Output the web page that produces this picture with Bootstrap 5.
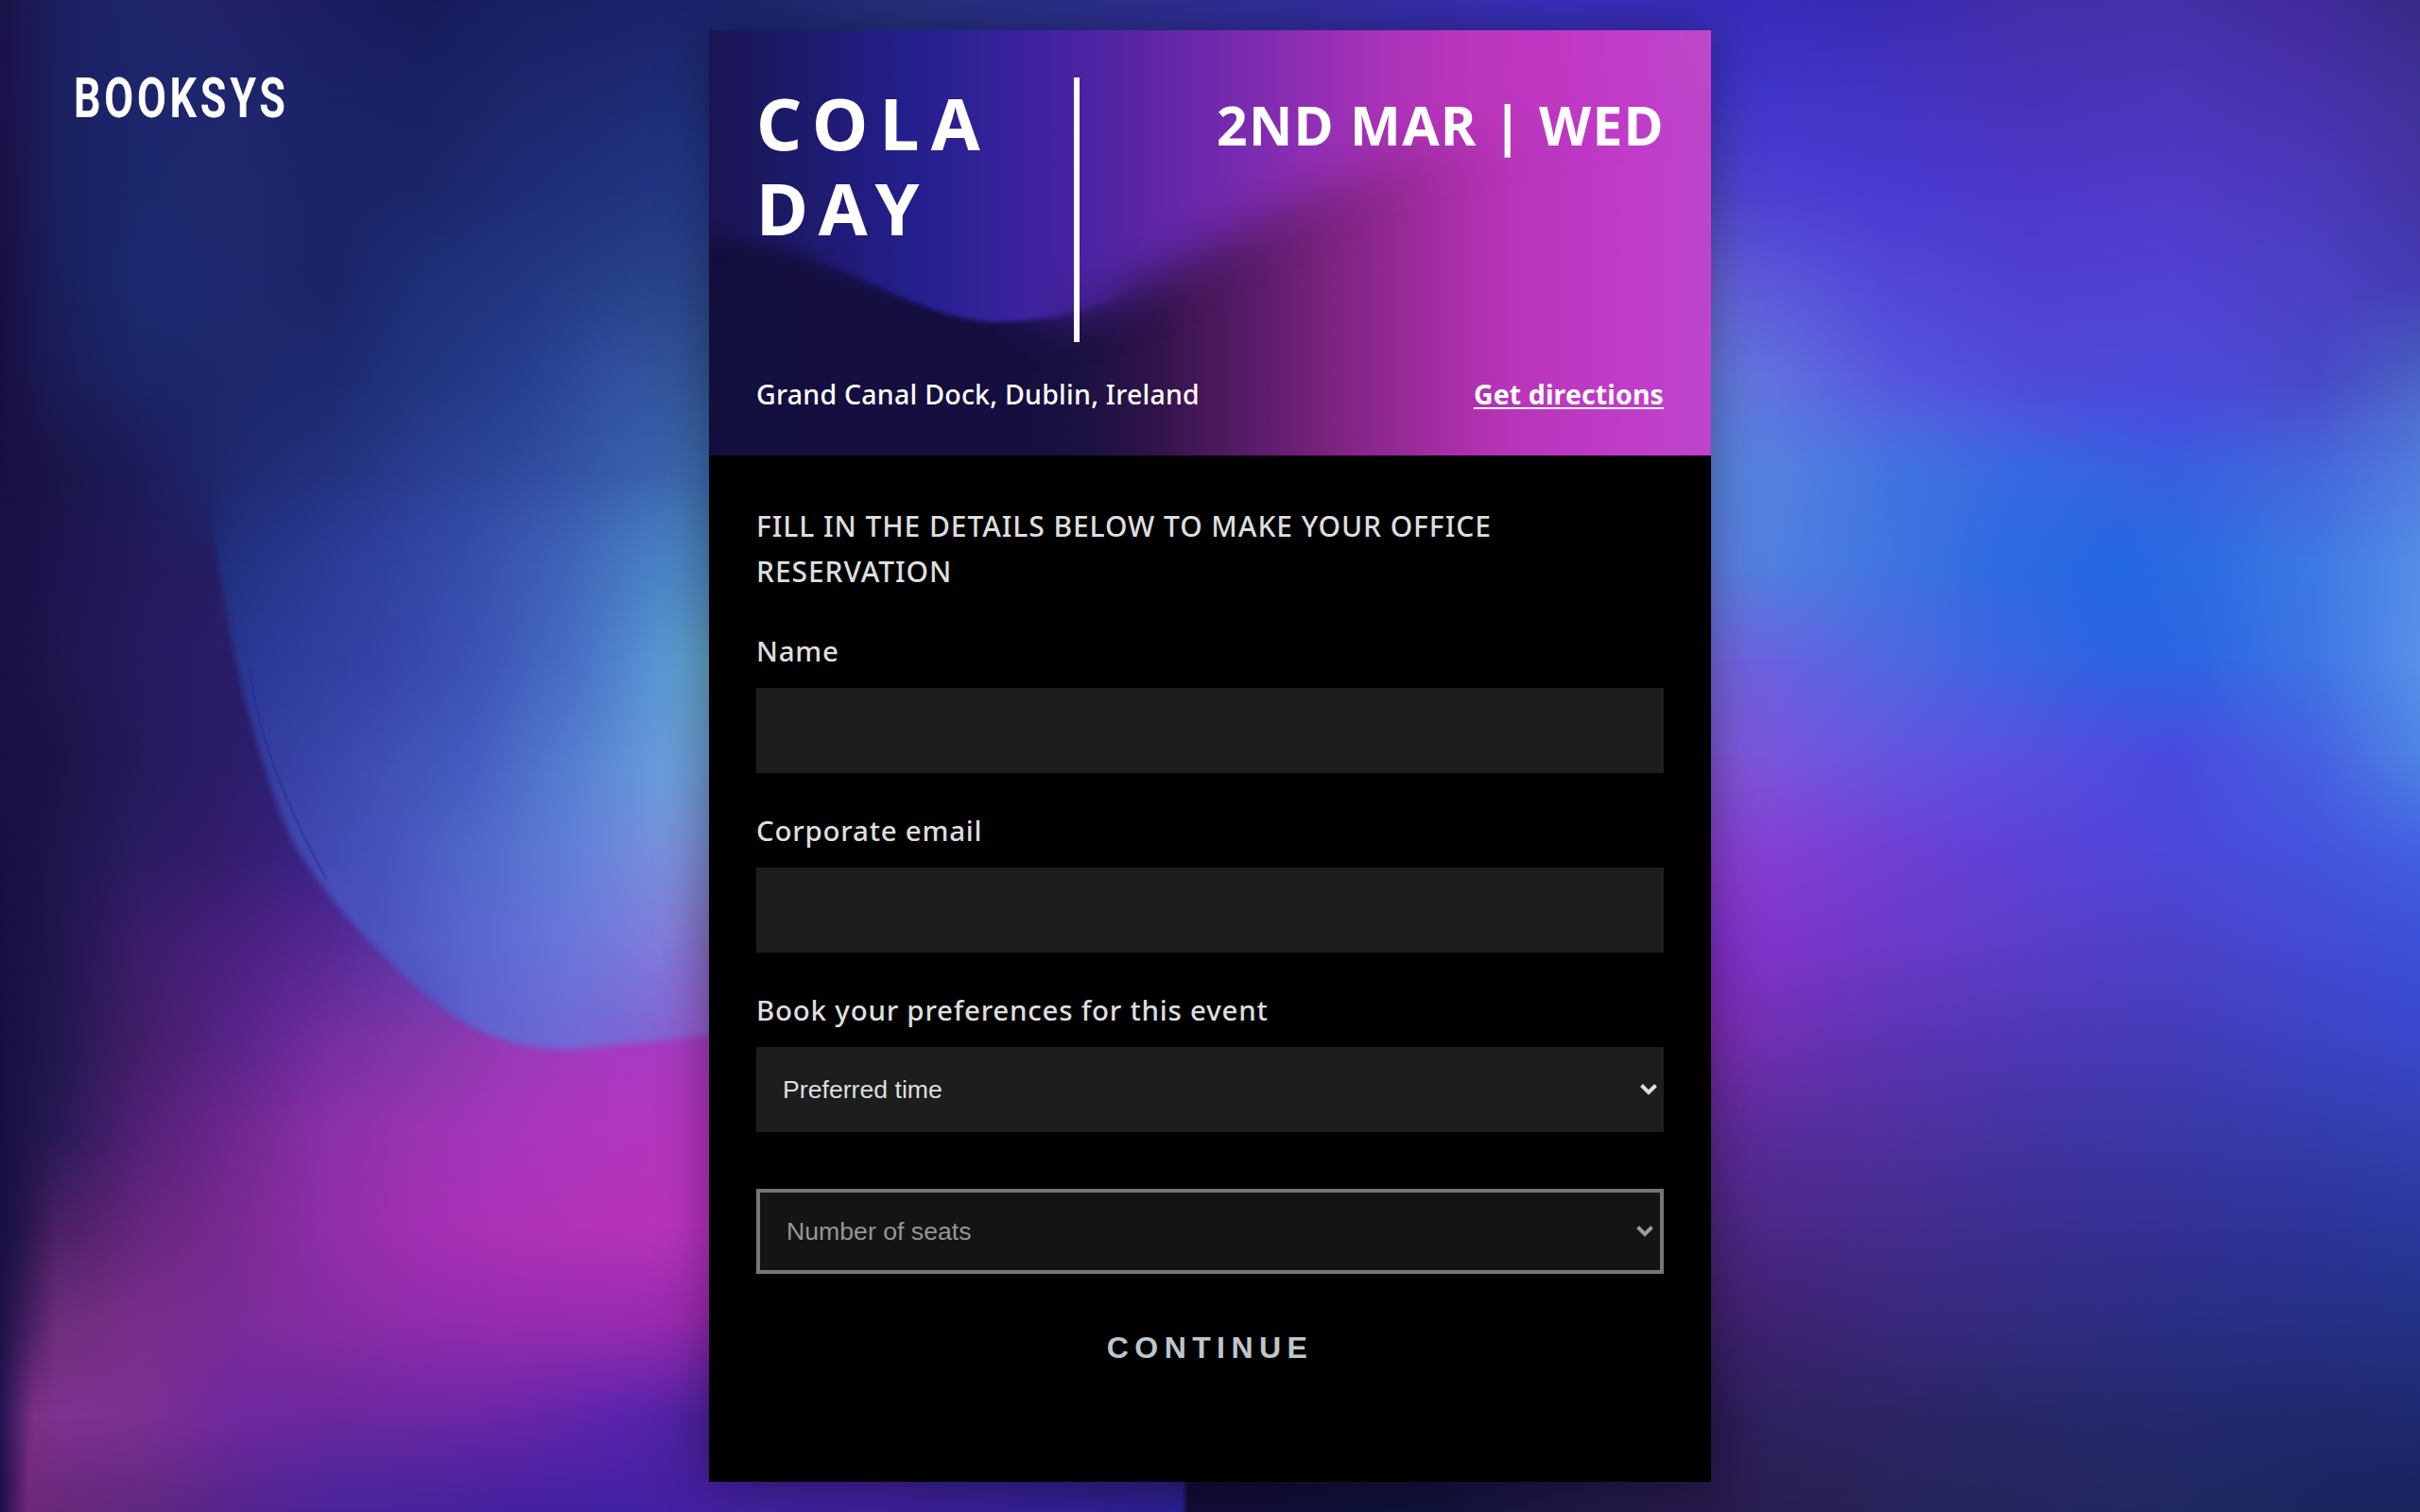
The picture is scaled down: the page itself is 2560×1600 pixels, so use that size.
<!DOCTYPE html>
<html lang="en">
<head>
<meta charset="utf-8">
<meta name="viewport" content="width=device-width, initial-scale=1">
<title>Booksys – Cola Day</title>
<link href="https://cdn.jsdelivr.net/npm/bootstrap@5.3.0/dist/css/bootstrap.min.css" rel="stylesheet">
<style>
  body { font-family: "Noto Sans", sans-serif; background: #1b1650; width: 2560px; height: 1600px; }
  .backdrop, .backdrop .wash, .blob, .blob-shape { position: absolute; inset: 0; }
  .blob { filter: blur(3px); -webkit-mask-image: linear-gradient(transparent 500px, #000 600px); mask-image: linear-gradient(transparent 500px, #000 600px); }
  .blob-shape { clip-path: path("M214 480 C222 540 224 560 230 587 C240 630 244 690 262 750 C275 796 290 850 311 892 C335 935 370 975 398 1003 C430 1037 470 1070 497 1085 C530 1102 560 1109 589 1110 C640 1110 700 1098 770 1094 L770 480 Z"); }
  .crease { position: absolute; left: 0; top: 0; }
  .brand { left: 78px; top: 70px; }
  .event-card { width: 1060px; height: 1536px; margin-top: 32px; background: #000; box-shadow: 0 0 50px rgba(0,0,0,.38); }
  .event-head { height: 450px; padding: 50px 50px 0; color: #fff; overflow: hidden; }
  .event-head > .art { position: absolute; left: 0; top: 0; }
  .event-title { width: 336px; height: 280px; font-size: 75px; line-height: 90px; font-weight: 700; letter-spacing: 12.3px; padding-top: 3px; }
  .rule { width: 6px; height: 280px; background: #fff; }
  .event-date { font-size: 57px; font-weight: 700; line-height: 84px; letter-spacing: 1.4px; margin-right: -1px; padding-top: 8px; white-space: nowrap; }
  .event-place { font-size: 28.5px; line-height: 48px; font-weight: 500; margin-top: 31px; letter-spacing: .25px; }
  .event-place a { color: #fff; font-weight: 700; letter-spacing: .12px; text-underline-offset: 3px; text-decoration-thickness: 2px; }
  .event-form { padding: 51px 50px 0; color: #dedede; font-size: 30px; line-height: 48px; font-weight: 500; letter-spacing: .93px; }
  .event-form label { font-size: 29.5px; letter-spacing: .76px; margin: 37px 0 15px; }
  .event-form .intro + label { margin-top: 36px; }
  .field { height: 90px; border: 0; border-radius: 0; background-color: #1c1e1d; color: #dedede; width: 100%; }
  .pick { font-family: "Liberation Sans", Arial, sans-serif; font-size: 26.67px; font-weight: 400; letter-spacing: 0; padding: 0 6px 0 28px; }
  .pick.waiting { border: 4px solid #767676; background: #131514; color: #959695; margin-top: 60px; }
  .go { font-family: "Liberation Sans", Arial, sans-serif; font-weight: 700; font-size: 32px; line-height: 40px; letter-spacing: 6.4px; color: #bdc7cb; border: 0; background: none; margin-top: 57px; }
</style>
<script src="https://cdn.jsdelivr.net/npm/bootstrap@5.3.0/dist/js/bootstrap.bundle.min.js"></script>
</head>
<body class="position-relative overflow-hidden m-0">

<div class="backdrop" aria-hidden="true">
  <div id="sky"></div>
  <div class="blob"><div class="blob-shape" id="drop"></div></div>
  <svg class="crease" width="400" height="1000" viewBox="0 0 400 1000" fill="none">
    <path d="M264 706 C270 760 290 830 345 930" stroke="#262a86" stroke-opacity=".4" stroke-width="3"/>
  </svg>
</div>

<header class="brand position-absolute">
  <svg class="overflow-visible" width="240" height="60" viewBox="0 0 240 60" role="img" aria-label="Booksys">
    <text transform="scale(.76 1)" x="0" y="54" letter-spacing="4.9" font-family="Roboto, sans-serif" font-weight="700" font-size="59" fill="#fff">BOOKSYS</text>
  </svg>
</header>

<main class="event-card position-relative mx-auto">
  <section class="event-head position-relative">
    <svg class="art" width="1060" height="450" viewBox="0 0 1060 450" aria-hidden="true">
      <defs>
        <linearGradient id="night" gradientUnits="userSpaceOnUse" x1="0" x2="1060" y1="0" y2="0">
          <stop offset="0" stop-color="#130f3d"/><stop offset=".32" stop-color="#150f3f"/><stop offset=".38" stop-color="#1c1140"/>
          <stop offset=".445" stop-color="#30134a"/><stop offset=".485" stop-color="#431756"/><stop offset=".55" stop-color="#5c1c6c"/>
          <stop offset=".61" stop-color="#78227e"/><stop offset=".675" stop-color="#902890"/><stop offset=".74" stop-color="#a82ea8"/>
          <stop offset=".8" stop-color="#b834b8"/><stop offset=".9" stop-color="#c03ac8"/><stop offset="1" stop-color="#bd44cc"/>
        </linearGradient>
        <linearGradient id="dusk" gradientUnits="userSpaceOnUse" x1="0" x2="1060" y1="0" y2="0">
          <stop offset="0" stop-color="#1b1452"/><stop offset=".075" stop-color="#1c1a66"/><stop offset=".135" stop-color="#211c7a"/>
          <stop offset=".2" stop-color="#231f8c"/><stop offset=".285" stop-color="#34229a"/><stop offset=".37" stop-color="#4a23a2"/>
          <stop offset=".445" stop-color="#5f26a8"/><stop offset=".53" stop-color="#782aae"/><stop offset=".61" stop-color="#942fb5"/>
          <stop offset=".675" stop-color="#aa33b8"/><stop offset=".77" stop-color="#bc36bc"/><stop offset=".84" stop-color="#c137c2"/>
          <stop offset=".93" stop-color="#c03ec8"/><stop offset="1" stop-color="#bc48c8"/>
        </linearGradient>
        <linearGradient id="fadeLeft" x1="0" x2="1060" y1="0" y2="0" gradientUnits="userSpaceOnUse">
          <stop offset=".12" stop-color="#fff"/><stop offset=".22" stop-color="#000"/>
        </linearGradient>
        <linearGradient id="fadeMid" x1="0" x2="1060" y1="0" y2="0" gradientUnits="userSpaceOnUse">
          <stop offset=".08" stop-color="#000"/><stop offset=".16" stop-color="#fff"/><stop offset=".33" stop-color="#fff"/><stop offset=".43" stop-color="#000"/>
        </linearGradient>
        <linearGradient id="fadeRight" x1="0" x2="1060" y1="0" y2="0" gradientUnits="userSpaceOnUse">
          <stop offset=".28" stop-color="#000"/><stop offset=".36" stop-color="#fff"/>
        </linearGradient>
        <mask id="mLeft" maskUnits="userSpaceOnUse" x="0" y="0" width="1060" height="450"><rect width="1060" height="450" fill="url(#fadeLeft)"/></mask>
        <mask id="mMid" maskUnits="userSpaceOnUse" x="0" y="0" width="1060" height="450"><rect width="1060" height="450" fill="url(#fadeMid)"/></mask>
        <mask id="mRight" maskUnits="userSpaceOnUse" x="0" y="0" width="1060" height="450"><rect width="1060" height="450" fill="url(#fadeRight)"/></mask>
        <filter id="soft" x="-20%" y="-40%" width="140%" height="180%" color-interpolation-filters="sRGB"><feGaussianBlur stdDeviation="25"/></filter>
        <filter id="medium" x="-20%" y="-40%" width="140%" height="180%" color-interpolation-filters="sRGB"><feGaussianBlur stdDeviation="10"/></filter>
        <filter id="tight" x="-20%" y="-40%" width="140%" height="180%" color-interpolation-filters="sRGB"><feGaussianBlur stdDeviation="2.4"/></filter>
      </defs>
      <rect width="1060" height="450" fill="url(#night)"/>
      <path filter="url(#medium)" fill="url(#dusk)" d="M-120 -120 H1200 V0 L700 70 L540 150 L430 225 L380 262 L300 284 L230 268 L160 228 L0 185 L-120 170 Z"/>
      <g mask="url(#mRight)"><path filter="url(#soft)" fill="url(#dusk)" d="M-120 -120 H1200 V60 C900 76 770 116 670 158 C570 206 500 250 430 282 C370 305 330 306 290 300 L130 240 L-120 150 Z"/></g>
      <g mask="url(#mLeft)"><path filter="url(#medium)" fill="url(#dusk)" d="M-120 -120 H1200 V60 C900 70 760 110 660 150 C580 190 500 245 430 284 C375 305 335 309 300 309 C255 307 205 284 160 262 C110 240 60 225 0 218 L-120 200 Z"/></g>
      <g mask="url(#mMid)"><path filter="url(#tight)" fill="url(#dusk)" d="M-120 -120 H1200 V60 C900 70 760 110 660 150 C580 190 500 245 430 284 C375 305 335 309 300 309 C255 307 205 284 160 262 C110 240 60 225 0 218 L-120 200 Z"/></g>
    </svg>
    <div class="d-flex position-relative">
      <h1 class="event-title mb-0">COLA<br>DAY</h1>
      <div class="rule"></div>
      <div class="event-date ms-auto">2ND MAR | WED</div>
    </div>
    <div class="event-place d-flex justify-content-between position-relative">
      <span>Grand Canal Dock, Dublin, Ireland</span>
      <a href="#">Get directions</a>
    </div>
  </section>

  <form class="event-form">
    <p class="intro mb-0">FILL IN THE DETAILS BELOW TO MAKE YOUR OFFICE<br>RESERVATION</p>
    <label class="d-block" for="name">Name</label>
    <input class="field d-block" id="name">
    <label class="d-block" for="mail">Corporate email</label>
    <input class="field d-block" id="mail">
    <label class="d-block">Book your preferences for this event</label>
    <div class="field pick d-flex align-items-center justify-content-between">
      <span>Preferred time</span>
      <svg width="20" height="14" viewBox="0 0 20 14" fill="none" stroke="#dedede" stroke-width="4"><path d="M2.5 2.5 L10 10 L17.5 2.5"/></svg>
    </div>
    <div class="field pick waiting d-flex align-items-center justify-content-between">
      <span>Number of seats</span>
      <svg width="20" height="14" viewBox="0 0 20 14" fill="none" stroke="#9a9b9a" stroke-width="4"><path d="M2.5 2.5 L10 10 L17.5 2.5"/></svg>
    </div>
    <div class="text-center"><button type="button" class="go">CONTINUE</button></div>
  </form>
</main>

<script>
  // Each row: y position, then "x colour" stops across the canvas. Rows cross-fade downwards.
  const sky = [
    [0, "0 #1a1348,60 #1d2062,150 #20266c,250 #22216a,350 #1c1d62,450 #161c5a,550 #1a2066,650 #1a2268,750 #1b246c,950 #26307c,1430 #352fa4,1650 #3a2fc0,1810 #362cbc,2000 #3a2ab2,2150 #4230a8,2300 #4530a8,2450 #412a9c,2560 #372a85"],
    [100, "0 #1b1249,60 #1a2060,150 #1d266c,250 #1e266c,350 #1b2266,450 #1a2164,550 #1c276c,650 #1e2a72,750 #1f2f7c,1810 #4236c8,1870 #4136ca,2000 #4434c2,2150 #4932b8,2300 #4c35b8,2450 #4831ac,2560 #3f3298"],
    [200, "0 #1a1146,60 #1a205e,150 #1a286c,250 #20286c,350 #1a2468,450 #1b266a,550 #1f2c76,650 #20327e,750 #243a88,1810 #5048cc,1870 #4c3fd2,2000 #4a3ad2,2150 #4d38ca,2300 #503ac8,2450 #4a3abb,2560 #4434a4"],
    [300, "0 #190f44,60 #1a1f5c,150 #1b2a70,250 #1e286e,350 #1b2468,450 #1e3078,550 #223682,650 #264088,750 #2c468e,1810 #6865d8,1870 #5c58da,2000 #5248d8,2150 #5040d2,2300 #5242d4,2450 #4c41c4,2560 #433cb4"],
    [400, "0 #190f42,60 #1b1c58,150 #1b2668,250 #1d286c,350 #1d2a70,450 #213680,550 #263e8e,650 #3250a0,750 #345898,1810 #667cde,1870 #6272de,2000 #5656de,2150 #504ada,2300 #4c4ada,2450 #4848c8,2560 #4a62c4"],
    [450, "0 #1a0f43,60 #1b1850,150 #1c2060,250 #1e296e,350 #202e76,450 #263a88,550 #2a4496,650 #3456a6,750 #3962a4,1810 #6080e0,1870 #5a7ae0,2000 #4e68e0,2150 #4859e0,2300 #4252e0,2450 #485ad2,2560 #4f72d4"],
    [500, "0 #1a0f44,60 #1a1648,150 #1d1c5c,250 #1f2a70,350 #24327e,450 #2a3e92,550 #304a9e,650 #385cac,750 #3e6cb0,1810 #5c86e2,1870 #5682e0,2000 #4274e0,2150 #3568e2,2300 #3860e0,2450 #4468dc,2560 #527cde"],
    [600, "0 #1b1044,60 #1e1450,150 #231a5c,225 #241d62,250 #26307c,350 #2c3c96,450 #3348a6,550 #3c5ab2,650 #4474c0,750 #4e88c0,1810 #6080e2,1870 #5080e0,2000 #4074e0,2120 #2d6ae2,2240 #2468e2,2330 #2a6ce2,2450 #3e7ae4,2560 #548ee8"],
    [700, "0 #1a1044,60 #20164e,150 #261a60,225 #2a1c66,750 #2a1c66,1810 #7468de,1870 #6a62e0,2000 #5068e0,2150 #3864e2,2240 #2c64e2,2330 #2e66e2,2450 #3e76e4,2560 #5890ea"],
    [800, "0 #1a1044,60 #1c1448,150 #241a5c,225 #2a1c68,300 #2e2070,750 #3a2488,1810 #8058d8,1870 #7a56dc,2000 #6455e0,2150 #5850e0,2300 #4a4ade,2450 #4660e2,2560 #4e84e4"],
    [900, "0 #180f42,60 #1e164c,150 #2a1c62,225 #321c6a,350 #3a2488,750 #5a30a0,1810 #8a40d0,1870 #8440d2,2000 #7040d4,2150 #5c42d8,2300 #4c48da,2450 #4454de,2560 #4360e2"],
    [1000, "0 #180f42,60 #20164e,150 #3c1c6a,250 #4a2080,350 #562894,450 #5c3cae,750 #8a3ab8,1810 #8030c8,1870 #8034ca,2000 #6c3ac8,2150 #5a3ec8,2300 #4c42c8,2450 #444ad4,2560 #3c50d8"],
    [1100, "0 #161044,60 #20184e,150 #431e68,250 #58248a,350 #742ea0,450 #8238aa,550 #9a3ab8,650 #a63ac2,750 #a63cc2,1810 #7a2cae,1870 #7030b2,2000 #5c34b4,2150 #4e38b6,2300 #443cb8,2450 #3c44c4,2560 #3a48cc"],
    [1200, "0 #161044,60 #281a54,150 #542078,250 #702890,350 #8c30a8,450 #9c34b4,550 #a836bc,650 #b236be,750 #b634bc,1810 #602a98,1870 #582c9a,2000 #50309e,2150 #4234a2,2300 #3a38a6,2450 #343cac,2560 #3340b0"],
    [1300, "0 #181044,20 #22144a,60 #4a2064,150 #66267e,250 #7a2a92,350 #902eaa,450 #a430b4,550 #ae32b8,650 #b432b8,750 #b834bc,1810 #4e2680,1870 #4c2888,2000 #442c8c,2150 #3a2e90,2300 #343094,2450 #2c3498,2560 #29389c"],
    [1400, "0 #1c1246,25 #3c1c5c,60 #6e2e7a,150 #7a2e8c,250 #7a2c98,350 #862ca4,450 #902cac,550 #962cae,650 #982cb0,750 #9828b0,1810 #40206c,1870 #3e2270,2000 #3a287c,2150 #322c80,2300 #2a2e84,2450 #263086,2560 #243284"],
    [1500, "0 #241450,16 #4a2068,36 #7c3086,60 #7e3290,150 #7a3090,250 #7028a0,350 #6a289c,450 #6c28a4,550 #6826a8,650 #5a24ac,750 #4c22a0,1810 #2c1c56,1870 #2e2260,2000 #2c2464,2150 #262868,2300 #24296e,2450 #20286c,2560 #1e2a70"],
    [1568, "0 #1c1048,11 #3a1658,30 #702a7e,150 #682a86,250 #5c2690,350 #52269c,450 #50249c,550 #4c22a2,650 #4822a4,750 #4620a0,1000 #3a1f90,1251 #2c1e80,1257 #160a36,1400 #101038,1500 #11123a,1700 #22184a,1810 #291a4e,1870 #2b2055,2000 #28245c,2150 #252660,2300 #212864,2450 #1d2664,2560 #1b2462"],
    [1600, "0 #1c1048,10 #3a1658,28 #6c2878,150 #602880,250 #55248c,350 #4c249a,450 #48229a,550 #4422a0,650 #4222a2,750 #4422a2,1000 #3a2098,1250 #2a2094,1256 #140c36,1400 #101038,1500 #10123a,1700 #241a4a,1810 #281a4c,1870 #2a1f52,2000 #26245a,2150 #24265e,2300 #202860,2450 #1c2660,2560 #1a245e"]
  ];
  const drop = [
    [500, "220 #1d2c72,300 #202f84,400 #2a3c92,500 #30489e,600 #3856ac,700 #4074b8,750 #3e70b0"],
    [600, "220 #202e7c,300 #28388c,400 #2f40a0,500 #374eac,600 #4064b8,700 #4a84c6,750 #4e88c0"],
    [700, "250 #2a3690,300 #2c3c9c,400 #3444a6,500 #3c52b4,600 #466cc4,700 #5898d4,750 #62a4c8"],
    [820, "300 #3840a4,400 #4050b2,500 #465ec2,600 #567ed0,700 #6a9cdc,750 #6f9cd4"],
    [900, "330 #4048b0,400 #4652bc,500 #5068c8,600 #607ed8,700 #7890dc,750 #7e8cd2"],
    [1000, "400 #4e52be,500 #5a66d0,600 #6a76da,700 #807cdc,750 #8870c8"],
    [1110, "450 #5050c0,500 #6060cc,600 #7068d4,700 #8460d4,750 #9858cc"]
  ];
  function paint(id, rows) {
    const host = document.getElementById(id);
    rows.forEach(([y, stops], i) => {
      const el = document.createElement("div");
      el.className = "wash";
      el.style.backgroundImage = "linear-gradient(90deg," + stops.split(",").map(s => { const [x, c] = s.split(" "); return c + " " + x + "px"; }).join(",") + ")";
      if (i) el.style.webkitMaskImage = el.style.maskImage = `linear-gradient(transparent ${rows[i - 1][0]}px,#000 ${y}px)`;
      host.appendChild(el);
    });
  }
  paint("sky", sky);
  paint("drop", drop);
</script>
</body>
</html>
